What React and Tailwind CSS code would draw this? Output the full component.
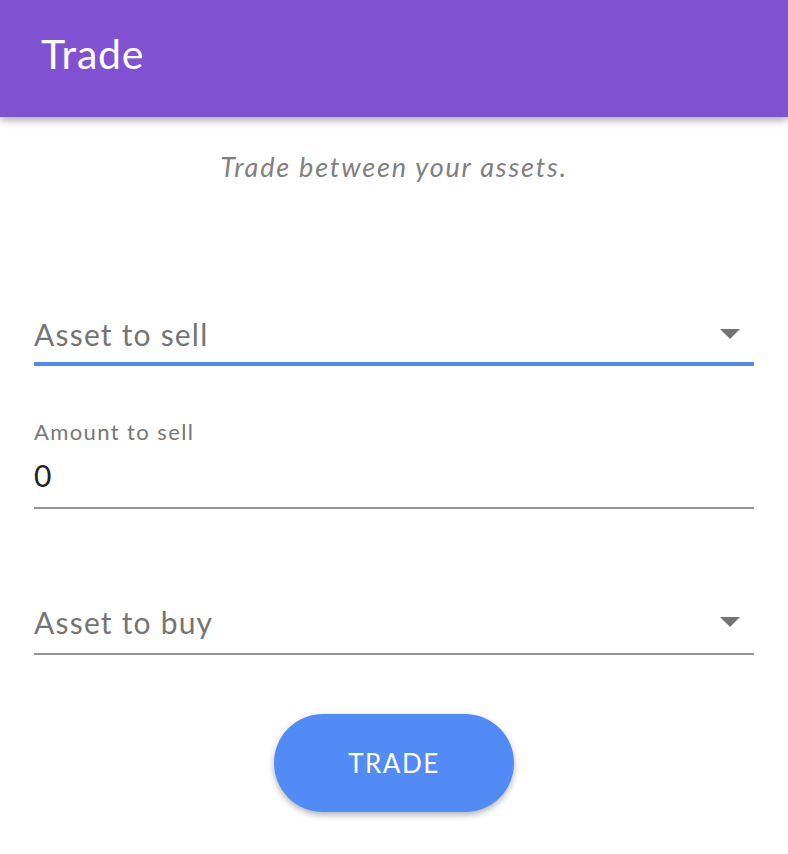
import React from "react";

const Caret = () => (
  <svg width="20" height="10" viewBox="0 0 20 10" className="shrink-0">
    <polygon points="0,0 20,0 10,10" fill="#757575" />
  </svg>
);

const SelectField = ({ label, active }) => (
  <div className="flex flex-col">
    <div className="flex items-center justify-between h-[48px] pr-[14px]">
      <span className="text-[30px] text-[#757575] leading-none tracking-[1.2px]">{label}</span>
      <Caret />
    </div>
    <div className={active ? "h-[4px] bg-[#5089f4] mt-[4px]" : "h-[2px] bg-[#959595] mt-[7px]"} />
  </div>
);

export default function App() {
  return (
    <div className="min-h-screen bg-white" style={{ fontFamily: "Lato, 'Open Sans', sans-serif" }}>
      <header className="h-[117px] bg-[#8052d1] flex items-center px-[41px] shadow-[0_3px_8px_rgba(0,0,0,0.35)]">
        <h1 className="text-[41px] text-white font-normal leading-none pb-[10px] tracking-[0.8px]">Trade</h1>
      </header>

      <p className="text-center italic text-[#808080] text-[27px] mt-[36px] leading-none tracking-[1.8px]">
        Trade between your assets.
      </p>

      <div className="px-[34px] mt-[130px] flex flex-col">
        <SelectField label="Asset to sell" active />

        <div className="mt-[55px] flex flex-col">
          <label className="text-[22px] text-[#777777] leading-none tracking-[1.4px]">Amount to sell</label>
          <div className="text-[30px] text-[#222222] leading-none mt-[17px]">0</div>
          <div className="h-[2px] bg-[#959595] mt-[17px]" />
        </div>

        <div className="mt-[89px]">
          <SelectField label="Asset to buy" />
        </div>

        <div className="flex justify-center mt-[59px]">
          <button className="w-[240px] h-[98px] rounded-full bg-[#528bf5] text-white text-[26px] tracking-[1.5px] shadow-[0_3px_6px_rgba(0,0,0,0.3)]">
            TRADE
          </button>
        </div>
      </div>
    </div>
  );
}
